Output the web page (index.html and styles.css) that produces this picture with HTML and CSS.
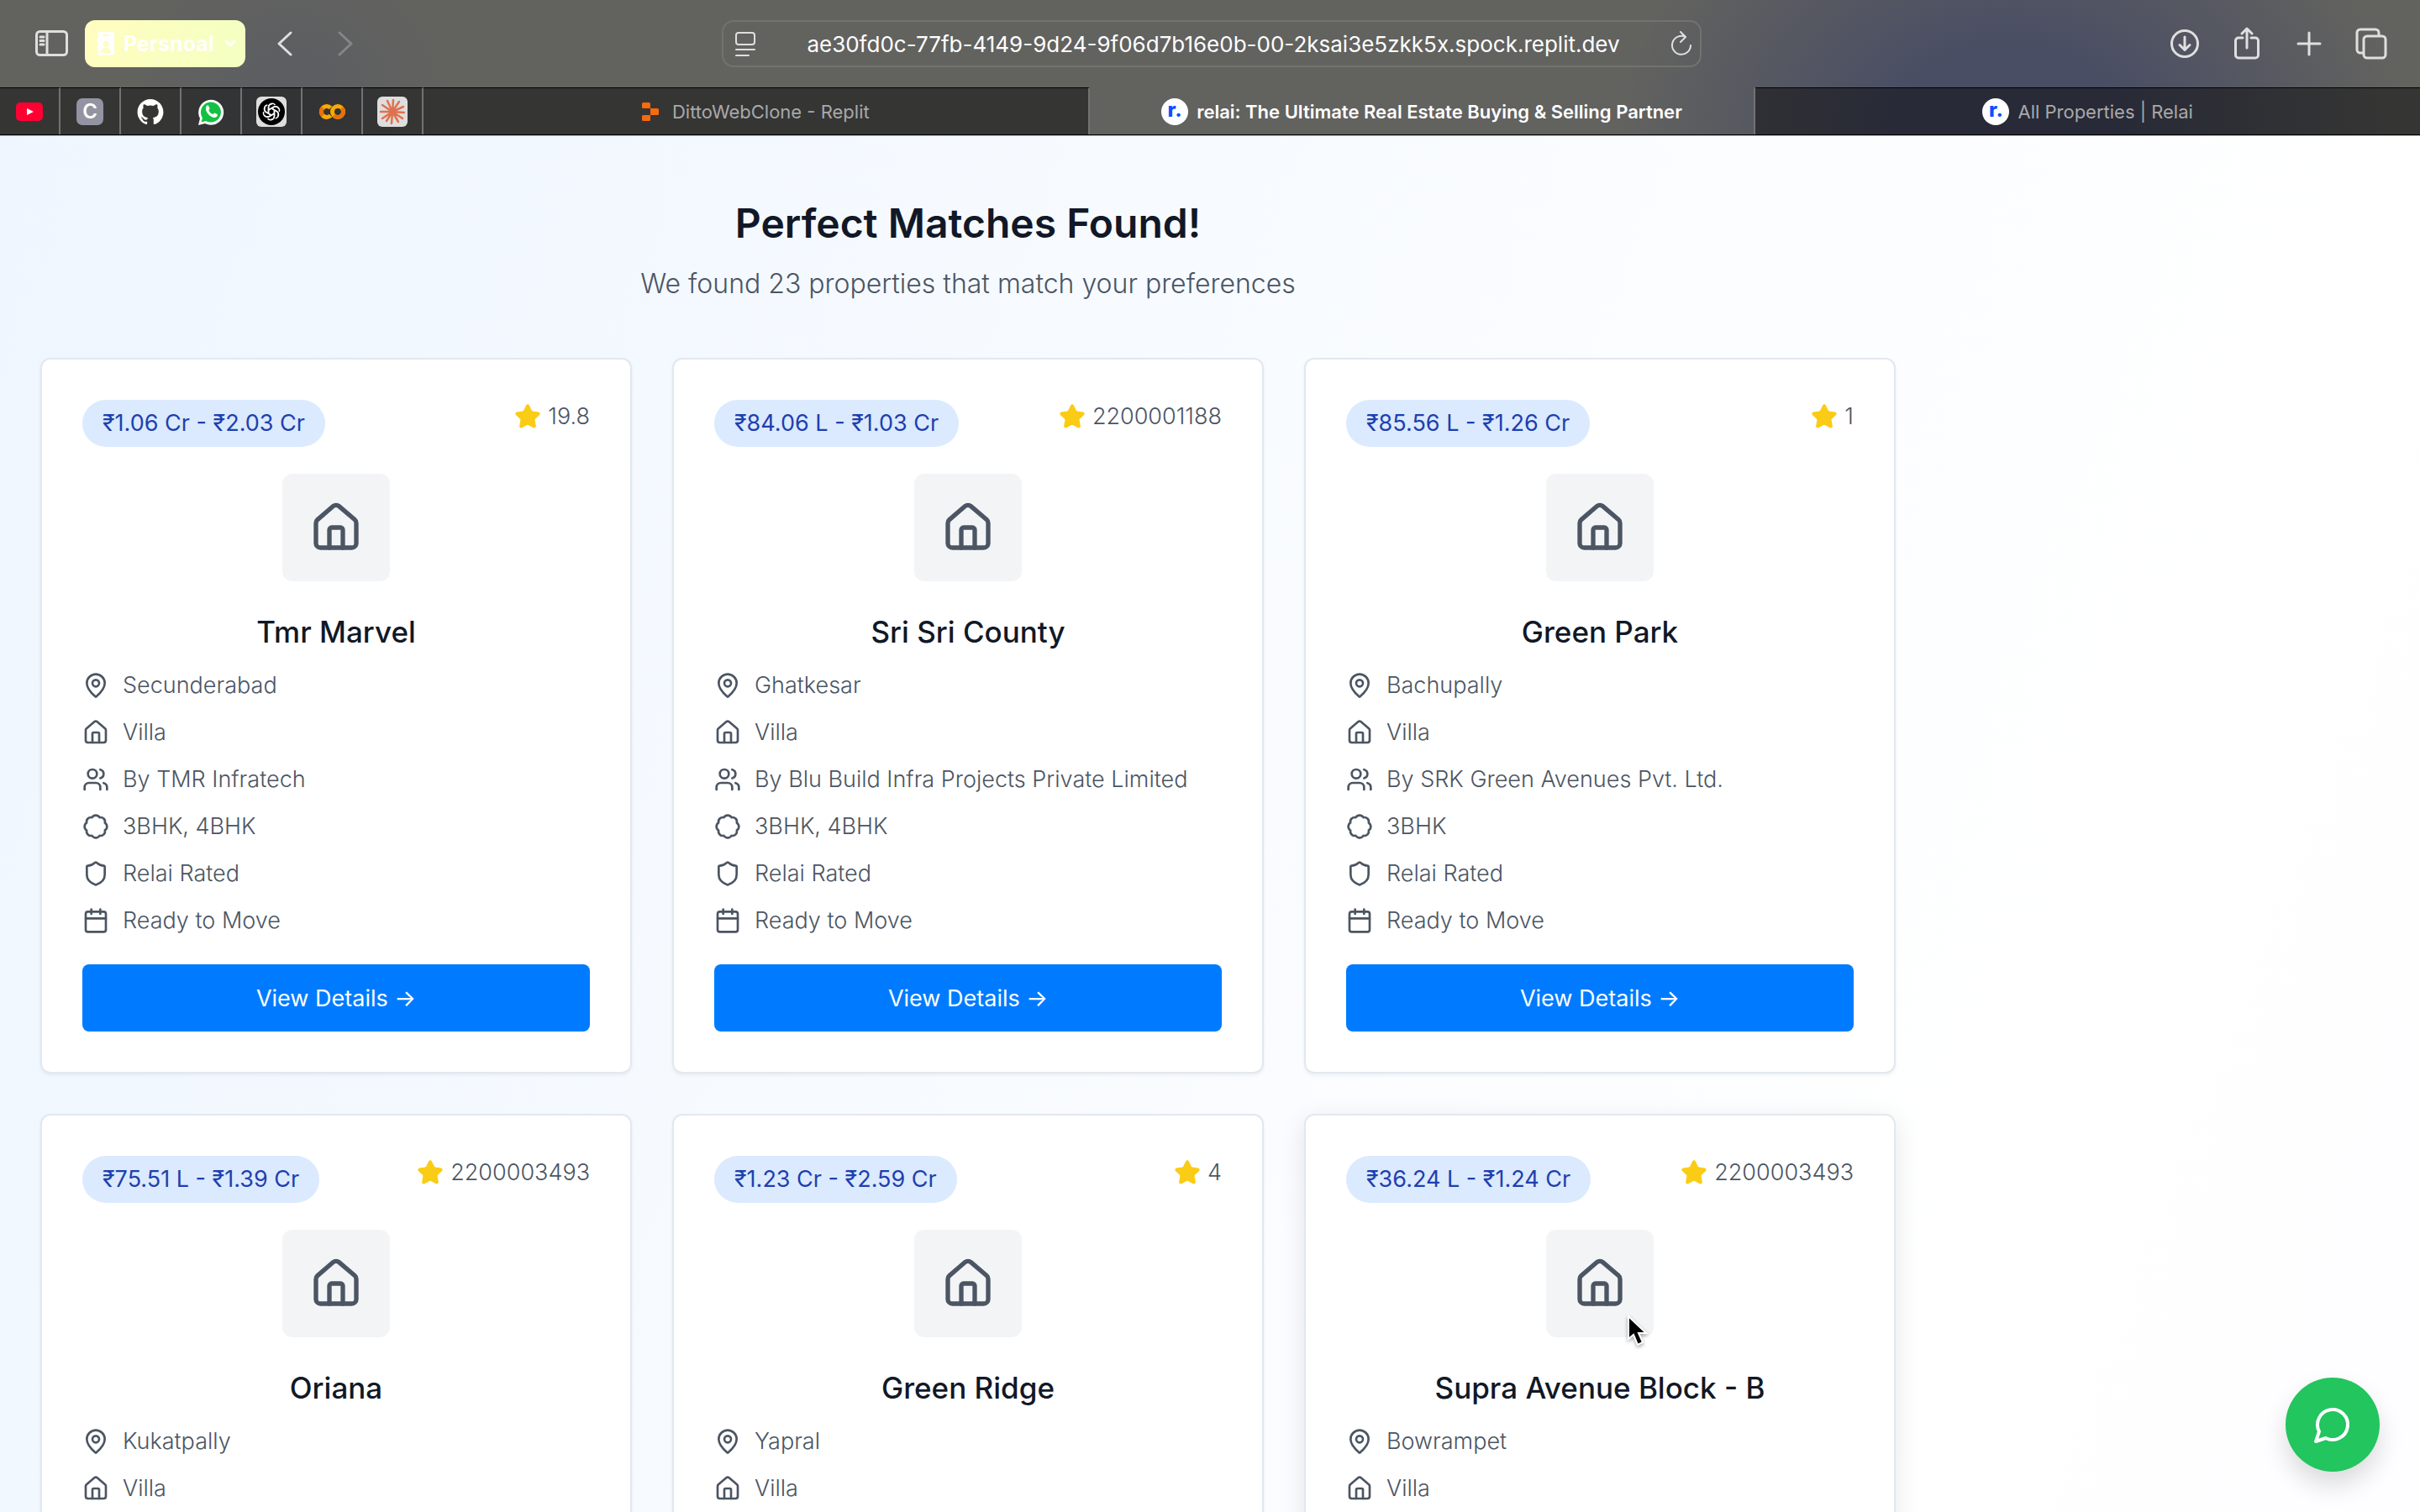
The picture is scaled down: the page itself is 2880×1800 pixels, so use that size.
FILE: index.html
```html
<!DOCTYPE html>
<html lang="en">
<head>
<meta charset="utf-8">
<meta name="viewport" content="width=device-width, initial-scale=1">
<title>relai: The Ultimate Real Estate Buying &amp; Selling Partner</title>
<link rel="stylesheet" href="styles.css">
</head>
<body>
<svg class="sprite" aria-hidden="true">
  <symbol id="house" viewBox="0 0 24 24"><path d="M15 21v-8a1 1 0 0 0-1-1h-4a1 1 0 0 0-1 1v8"/><path d="M3 10a2 2 0 0 1 .709-1.528l7-5.999a2 2 0 0 1 2.582 0l7 5.999A2 2 0 0 1 21 10v9a2 2 0 0 1-2 2H5a2 2 0 0 1-2-2z"/></symbol>
  <symbol id="pin" viewBox="0 0 24 24"><path d="M20 10c0 4.993-5.539 10.193-7.399 11.799a1 1 0 0 1-1.202 0C9.539 20.193 4 14.993 4 10a8 8 0 0 1 16 0"/><circle cx="12" cy="10" r="3"/></symbol>
  <symbol id="users" viewBox="0 0 24 24"><path d="M16 21v-2a4 4 0 0 0-4-4H6a4 4 0 0 0-4 4v2"/><circle cx="9" cy="7" r="4"/><path d="M22 21v-2a4 4 0 0 0-3-3.87"/><path d="M16 3.13a4 4 0 0 1 0 7.75"/></symbol>
  <symbol id="badge" viewBox="0 0 24 24"><path d="M3.85 8.62a4 4 0 0 1 4.78-4.77 4 4 0 0 1 6.74 0 4 4 0 0 1 4.78 4.78 4 4 0 0 1 0 6.74 4 4 0 0 1-4.77 4.78 4 4 0 0 1-6.75 0 4 4 0 0 1-4.78-4.77 4 4 0 0 1 0-6.76Z"/></symbol>
  <symbol id="shield" viewBox="0 0 24 24"><path d="M20 13c0 5-3.5 7.5-7.66 8.95a1 1 0 0 1-.67-.01C7.5 20.5 4 18 4 13V6a1 1 0 0 1 1-1c2 0 4.5-1.2 6.24-2.72a1.17 1.17 0 0 1 1.52 0C14.51 3.81 17 5 19 5a1 1 0 0 1 1 1z"/></symbol>
  <symbol id="calendar" viewBox="0 0 24 24"><path d="M8 2v4M16 2v4M3 10h18"/><rect x="3" y="4" width="18" height="18" rx="2"/></symbol>
  <symbol id="star" viewBox="0 0 24 24"><path d="M11.525 2.295a.53.53 0 0 1 .95 0l2.31 4.679a2.123 2.123 0 0 0 1.595 1.16l5.166.756a.53.53 0 0 1 .294.904l-3.736 3.638a2.123 2.123 0 0 0-.611 1.878l.882 5.14a.53.53 0 0 1-.771.56l-4.618-2.428a2.122 2.122 0 0 0-1.973 0L6.396 21.01a.53.53 0 0 1-.77-.56l.881-5.139a2.122 2.122 0 0 0-.611-1.879L2.16 9.795a.53.53 0 0 1 .294-.906l5.165-.755a2.122 2.122 0 0 0 1.597-1.16z"/></symbol>
</svg>

<header class="browser">
  <div class="toolbar">
    <div class="toolbar-left">
      <button class="tool" aria-label="Sidebar"><svg class="w40" viewBox="0 0 40 32"><rect x="1.5" y="1.5" width="36" height="28" rx="4"/><path d="M14 2v27M6 8h4M6 12.500h4M6 17h4"/></svg></button>
      <button class="profile">
        <svg class="profile-card" viewBox="0 0 20 28"><path fill-rule="evenodd" d="M3 0h14a3 3 0 0 1 3 3v22a3 3 0 0 1-3 3H3a3 3 0 0 1-3-3V3a3 3 0 0 1 3-3zM6 3v2h8V3zM10 11a3.500 3.500 0 1 0 .01 0zM4 25c0-4 3-6 6-6s6 2 6 6z"/></svg>
        <span>Persnoal</span>
        <svg class="profile-arrow" viewBox="0 0 16 12"><path d="M3 3l5 5 5-5"/></svg>
      </button>
      <button class="tool back" aria-label="Back"><svg class="w20" viewBox="0 0 20 32"><path d="M17 3L3 16l14 13"/></svg></button>
      <button class="tool forward" aria-label="Forward"><svg class="w20" viewBox="0 0 20 32"><path d="M3 3l14 13L3 29"/></svg></button>
    </div>
    <div class="address">
      <svg class="w24" viewBox="0 0 24 30"><rect x="1" y="2" width="22" height="14" rx="3"/><path d="M1 22h22M1 29h15"/></svg>
      <input class="address-input" type="text" aria-label="Address" value="ae30fd0c-77fb-4149-9d24-9f06d7b16e0b-00-2ksai3e5zkk5x.spock.replit.dev">
      <button class="tool" aria-label="Reload"><svg class="w24" viewBox="0 0 24 30"><path d="M17 7A11 11 0 1 0 23 17M11 1l6 6-6 6"/></svg></button>
    </div>
    <div class="toolbar-right">
      <button class="tool" aria-label="Downloads"><svg class="w40" viewBox="0 0 40 40"><circle cx="20" cy="20" r="15.500"/><path d="M20 12v15M14 21.500l6 6 6-6"/></svg></button>
      <button class="tool" aria-label="Share"><svg class="w40" viewBox="0 0 40 40"><path d="M15 13h-5a3.500 3.500 0 0 0-3.500 3.500v17A3.500 3.500 0 0 0 10 37h20a3.500 3.500 0 0 0 3.500-3.500v-17A3.500 3.500 0 0 0 30 13h-5M20 25V3M14 8l6-6 6 6"/></svg></button>
      <button class="tool" aria-label="New tab"><svg class="w40" viewBox="0 0 40 40"><path d="M20 7v26M7 20h26"/></svg></button>
      <button class="tool" aria-label="Tab overview"><svg class="w40" viewBox="0 0 40 40"><path d="M10 31H7a4 4 0 0 1-4-4V7a4 4 0 0 1 4-4h18a4 4 0 0 1 4 4v3"/><rect x="11" y="11" width="26" height="26" rx="4"/></svg></button>
    </div>
  </div>

  <nav class="tabs" aria-label="Tabs">
    <a class="pinned" href="#" aria-label="YouTube"><svg viewBox="0 0 36 36"><rect x="2" y="7" width="32" height="22" rx="5" fill="#ff0033"/><path d="M15 14l8 4-8 4z" fill="#fff"/></svg></a>
    <a class="pinned" href="#" aria-label="C"><span class="letter">C</span></a>
    <a class="pinned" href="#" aria-label="GitHub"><svg viewBox="-2 -2 28 28"><path fill="#fff" d="M12 .297c-6.630 0-12 5.373-12 12 0 5.303 3.438 9.800 8.205 11.385.6.113.820-.258.820-.577 0-.285-.010-1.040-.015-2.040-3.338.724-4.042-1.610-4.042-1.610C4.422 18.070 3.633 17.700 3.633 17.700c-1.087-.744.084-.729.084-.729 1.205.084 1.838 1.236 1.838 1.236 1.070 1.835 2.809 1.305 3.495.998.108-.776.417-1.305.760-1.605-2.665-.3-5.466-1.332-5.466-5.930 0-1.310.465-2.380 1.235-3.220-.135-.303-.540-1.523.105-3.176 0 0 1.005-.322 3.300 1.230.960-.267 1.980-.399 3-.405 1.020.006 2.040.138 3 .405 2.280-1.552 3.285-1.230 3.285-1.230.645 1.653.240 2.873.120 3.176.765.840 1.230 1.910 1.230 3.220 0 4.610-2.805 5.625-5.475 5.920.420.360.810 1.096.810 2.220 0 1.606-.015 2.896-.015 3.286 0 .315.210.690.825.570C20.565 22.092 24 17.592 24 12.297c0-6.627-5.373-12-12-12"/></svg></a>
    <a class="pinned" href="#" aria-label="WhatsApp"><svg viewBox="0 0 36 36"><path fill="#fff" d="M3 34l2-8A15 15 0 1 1 11 32z"/><path fill="#12c143" d="M6.500 30.500l1.500-5.200A12 12 0 1 1 12 29z"/><path fill="#fff" d="M13 11c.8-.8 2-.6 2.300.2l1.200 2.800c.2.600-1.200 1.900-1 2.400 1 2 2.600 3.600 4.700 4.500.600.200 1.700-1.700 2.300-1.500l3 1.500c.9.500.3 2.400-.6 3.100-2.500 2-6.400.4-9.300-2.300-3-2.900-4.800-7.300-2.900-10.400z"/></svg></a>
    <a class="pinned" href="#" aria-label="ChatGPT"><svg viewBox="0 0 36 36"><rect width="36" height="36" rx="6" fill="#dedede"/><circle cx="18" cy="18" r="16" fill="#000"/><g fill="none" stroke="#fff" stroke-width="1.500" stroke-linejoin="round"><path id="petal" d="M14.500 20V12.500a4.500 4.500 0 0 1 8-2.500M14.500 16l6-3.500a4.500 4.500 0 0 1 6 1.500"/><use href="#petal" transform="rotate(60 18 18)"/><use href="#petal" transform="rotate(120 18 18)"/><use href="#petal" transform="rotate(180 18 18)"/><use href="#petal" transform="rotate(240 18 18)"/><use href="#petal" transform="rotate(300 18 18)"/></g></svg></a>
    <a class="pinned" href="#" aria-label="Colab"><svg viewBox="0 0 36 36"><g fill="none" stroke-width="5"><path stroke="#f9ab00" d="M16.500 13.500A6.500 6.500 0 1 0 16.500 22.500"/><path stroke="#e8710a" d="M7.400 13.400a6.500 6.500 0 0 0 0 9.200"/><circle cx="25" cy="18" r="6.500" stroke="#f9ab00"/><path stroke="#e8710a" d="M29.600 13.400a6.500 6.500 0 0 1-9.200 9.200"/></g></svg></a>
    <a class="pinned" href="#" aria-label="Claude"><svg viewBox="0 0 36 36"><rect width="36" height="36" rx="6" fill="#dedede"/><g stroke="#e0714f" stroke-width="2.500" stroke-linecap="round"><path d="M18 18L19 4M18 18L26 6M18 18l13-6M18 18l14 1M18 18l12 8M18 18l7 12M18 18l-1 14M18 18l-7 11M18 18L6 26M18 18H4M18 18L6 10M18 18L12 5"/></g></svg></a>
    <a class="tab" href="#"><svg class="replit" viewBox="0 0 20 24"><path fill="#f9690e" d="M1.500 1h7A1.500 1.500 0 0 1 10 2.500V8H1.500A1.500 1.500 0 0 1 0 6.500v-4A1.500 1.500 0 0 1 1.500 1zM10 8h8.500A1.500 1.500 0 0 1 20 9.500v5a1.500 1.500 0 0 1-1.500 1.500H10zM1.500 16H10v5.500A1.500 1.500 0 0 1 8.500 23h-7A1.500 1.500 0 0 1 0 21.500v-4A1.500 1.500 0 0 1 1.500 16z"/></svg><span>DittoWebClone - Replit</span></a>
    <a class="tab active" href="#" aria-current="page"><span class="relai">r.</span><span>relai: The Ultimate Real Estate Buying &amp; Selling Partner</span></a>
    <a class="tab" href="#"><span class="relai">r.</span><span>All Properties | Relai</span></a>
  </nav>
</header>

<main class="page">
  <div class="container">
    <div class="intro">
      <h1>Perfect Matches Found!</h1>
      <p>We found 23 properties that match your preferences</p>
    </div>
    <div class="grid">
      <article class="card">
        <div class="card-top"><span class="price">₹1.06 Cr - ₹2.03 Cr</span><span class="rating"><svg class="star"><use href="#star"/></svg>19.8</span></div>
        <div class="thumb"><svg class="icon"><use href="#house"/></svg></div>
        <h2>Tmr Marvel</h2>
        <ul class="facts">
          <li><svg class="icon"><use href="#pin"/></svg>Secunderabad</li>
          <li><svg class="icon"><use href="#house"/></svg>Villa</li>
          <li><svg class="icon"><use href="#users"/></svg>By TMR Infratech</li>
          <li><svg class="icon"><use href="#badge"/></svg>3BHK, 4BHK</li>
          <li><svg class="icon"><use href="#shield"/></svg>Relai Rated</li>
          <li><svg class="icon"><use href="#calendar"/></svg>Ready to Move</li>
        </ul>
        <button class="details">View Details →</button>
      </article>
      <article class="card">
        <div class="card-top"><span class="price">₹84.06 L - ₹1.03 Cr</span><span class="rating"><svg class="star"><use href="#star"/></svg>2200001188</span></div>
        <div class="thumb"><svg class="icon"><use href="#house"/></svg></div>
        <h2>Sri Sri County</h2>
        <ul class="facts">
          <li><svg class="icon"><use href="#pin"/></svg>Ghatkesar</li>
          <li><svg class="icon"><use href="#house"/></svg>Villa</li>
          <li><svg class="icon"><use href="#users"/></svg>By Blu Build Infra Projects Private Limited</li>
          <li><svg class="icon"><use href="#badge"/></svg>3BHK, 4BHK</li>
          <li><svg class="icon"><use href="#shield"/></svg>Relai Rated</li>
          <li><svg class="icon"><use href="#calendar"/></svg>Ready to Move</li>
        </ul>
        <button class="details">View Details →</button>
      </article>
      <article class="card">
        <div class="card-top"><span class="price">₹85.56 L - ₹1.26 Cr</span><span class="rating"><svg class="star"><use href="#star"/></svg>1</span></div>
        <div class="thumb"><svg class="icon"><use href="#house"/></svg></div>
        <h2>Green Park</h2>
        <ul class="facts">
          <li><svg class="icon"><use href="#pin"/></svg>Bachupally</li>
          <li><svg class="icon"><use href="#house"/></svg>Villa</li>
          <li><svg class="icon"><use href="#users"/></svg>By SRK Green Avenues Pvt. Ltd.</li>
          <li><svg class="icon"><use href="#badge"/></svg>3BHK</li>
          <li><svg class="icon"><use href="#shield"/></svg>Relai Rated</li>
          <li><svg class="icon"><use href="#calendar"/></svg>Ready to Move</li>
        </ul>
        <button class="details">View Details →</button>
      </article>
      <article class="card">
        <div class="card-top"><span class="price">₹75.51 L - ₹1.39 Cr</span><span class="rating"><svg class="star"><use href="#star"/></svg>2200003493</span></div>
        <div class="thumb"><svg class="icon"><use href="#house"/></svg></div>
        <h2>Oriana</h2>
        <ul class="facts">
          <li><svg class="icon"><use href="#pin"/></svg>Kukatpally</li>
          <li><svg class="icon"><use href="#house"/></svg>Villa</li>
        </ul>
      </article>
      <article class="card">
        <div class="card-top"><span class="price">₹1.23 Cr - ₹2.59 Cr</span><span class="rating"><svg class="star"><use href="#star"/></svg>4</span></div>
        <div class="thumb"><svg class="icon"><use href="#house"/></svg></div>
        <h2>Green Ridge</h2>
        <ul class="facts">
          <li><svg class="icon"><use href="#pin"/></svg>Yapral</li>
          <li><svg class="icon"><use href="#house"/></svg>Villa</li>
        </ul>
      </article>
      <article class="card raised">
        <div class="card-top"><span class="price">₹36.24 L - ₹1.24 Cr</span><span class="rating"><svg class="star"><use href="#star"/></svg>2200003493</span></div>
        <div class="thumb"><svg class="icon"><use href="#house"/></svg>
          <svg class="cursor" viewBox="0 0 28 40"><path d="M3 3v27l6-5 5 12 6-3-5-11h9z"/></svg>
        </div>
        <h2>Supra Avenue Block - B</h2>
        <ul class="facts">
          <li><svg class="icon"><use href="#pin"/></svg>Bowrampet</li>
          <li><svg class="icon"><use href="#house"/></svg>Villa</li>
        </ul>
      </article>
    </div>
  </div>
</main>
<button class="chat" aria-label="Chat"><svg viewBox="0 0 24 24"><path d="M7.900 20A9 9 0 1 0 4 16.100L2 22Z"/></svg></button>
</body>
</html>
```
FILE: styles.css
```css
* { box-sizing: border-box; }

body {
  margin: 0;
  height: 100vh;
  display: flex;
  flex-direction: column;
  overflow: hidden;
  font-family: Inter, "Liberation Sans", sans-serif;
  color: #4b5563;
}

button, input { font: inherit; color: inherit; border: 0; background: none; padding: 0; }
a { color: inherit; text-decoration: none; }
svg { display: block; flex: none; }
.sprite { position: absolute; width: 0; height: 0; }

/* Browser chrome */
.browser {
  flex: none;
  background:
    radial-gradient(460px 320px at 83% 150px, #4a4e64 30%, rgba(74, 80, 100, 0)),
    radial-gradient(180px 160px at 12% 110px, #5b5d62, rgba(91, 93, 98, 0)),
    #62625f;
  border-bottom: 1px solid #000;
  box-shadow: 0 1px 0 #b4b4b4;
  margin-bottom: 1px;
  position: relative;
}

.toolbar {
  height: 104px;
  display: grid;
  grid-template-columns: 1fr minmax(0, 1166px) 1fr;
  align-items: center;
  padding: 0 38px 0 42px;
}
.toolbar-left, .toolbar-right { display: flex; align-items: center; }
.toolbar-right { justify-content: flex-end; gap: 34px; }
.tool { display: flex; }
.tool svg, .address > svg {
  fill: none;
  stroke: #dfdfdf;
  stroke-width: 3;
  stroke-linecap: round;
  stroke-linejoin: round;
}
.address svg { stroke-width: 2; }
.w20 { width: 20px; height: 32px; }
.w24 { width: 24px; height: 30px; }
.w40 { width: 40px; }
.profile {
  display: flex;
  align-items: center;
  gap: 11px;
  height: 56px;
  margin-left: 19px;
  padding: 0 10px 0 15px;
  border-radius: 12px;
  background: linear-gradient(100deg, #fffdbf, #f4ffc2);
  color: #fff;
  font-size: 25px;
  font-weight: 700;
}
.profile-card { width: 20px; height: 28px; fill: #fff; }
.profile-arrow { width: 16px; height: 12px; fill: none; stroke: #fff; stroke-width: 3; stroke-linecap: round; stroke-linejoin: round; }
.back { margin-left: 37px; }
.forward { margin-left: 52px; opacity: 0.3; }

.address {
  display: flex;
  align-items: center;
  height: 56px;
  padding: 0 10px 0 14px;
  border: 2px solid #72726f;
  border-radius: 14px;
  color: #fff;
}
.address-input {
  flex: 1;
  min-width: 0;
  text-align: center;
  font-size: 26px;
  font-weight: 400;
}

.tabs { display: flex; height: 56px; }
.pinned, .tab {
  display: flex;
  align-items: center;
  justify-content: center;
  border-top: 1px solid #000;
  border-right: 2px solid #727272;
  background: rgba(0, 0, 0, 0.45);
}
.pinned { flex: none; width: 72px; }
.pinned svg { width: 36px; height: 36px; }
.letter {
  width: 32px;
  height: 32px;
  border-radius: 7px;
  background: #9294a2;
  color: #fff;
  font-size: 24px;
  line-height: 32px;
  font-weight: 600;
  text-align: center;
}
.tab { flex: 1; gap: 10px; font-size: 22px; font-weight: 400; color: #a9a9a9; }
.tab:last-child { border-right: 0; }
.tab.active { background: none; border-top-color: transparent; color: #fff; font-weight: 600; }
.replit { width: 20px; height: 24px; margin-right: 6px; }
.relai {
  width: 32px;
  height: 32px;
  border-radius: 50%;
  background: #fff;
  color: #0a50ff;
  font-size: 24px;
  line-height: 28px;
  font-weight: 800;
  text-align: center;
}

/* Results page */
.page {
  flex: 1;
  min-height: 0;
  overflow: hidden;
  background: linear-gradient(to bottom right, #eff6ff, #fff, #faf5ff) 0 0 / 100% 7500px;
}
.container { max-width: 2304px; padding: 72px 48px; }
.intro { margin-bottom: 64px; text-align: center; }
h1, h2, p, ul { margin: 0; }
h1 { margin-bottom: 16px; font-size: 48px; line-height: 64px; font-weight: 600; color: #111827; }
.intro p { font-size: 32px; line-height: 48px; font-weight: 300; }

.grid {
  display: grid;
  grid-template-columns: repeat(3, minmax(0, 1fr));
  grid-auto-rows: 1fr;
  gap: 48px;
}
.card {
  padding: 48px;
  border: 2px solid #e2e8f0;
  border-radius: 12px;
  background: #fff;
  box-shadow: 0 2px 4px rgba(0, 0, 0, 0.06);
}
.raised { box-shadow: 0 8px 30px rgba(0, 0, 0, 0.1); }
.card-top { display: flex; justify-content: space-between; align-items: flex-start; margin-bottom: 32px; }
.price {
  padding: 8px 24px;
  border-radius: 28px;
  background: #dbeafe;
  color: #1e40af;
  font-size: 27px;
  line-height: 40px;
  font-weight: 400;
}
.rating { display: flex; align-items: center; gap: 8px; font-size: 27px; line-height: 40px; font-weight: 300; }
.star { width: 32px; height: 32px; fill: #facc15; stroke: #facc15; stroke-width: 2; }
.icon {
  width: 32px;
  height: 32px;
  fill: none;
  stroke: #4b5563;
  stroke-width: 2;
  stroke-linecap: round;
  stroke-linejoin: round;
}
.thumb {
  position: relative;
  display: flex;
  align-items: center;
  justify-content: center;
  width: 128px;
  height: 128px;
  margin: 0 auto 32px;
  border-radius: 12px;
  background: #f3f4f6;
}
.thumb .icon { width: 64px; height: 64px; }
.cursor {
  position: absolute;
  right: 5px;
  bottom: -12px;
  width: 28px;
  height: 40px;
  fill: #000;
  stroke: #fff;
  stroke-width: 2;
  filter: drop-shadow(0 2px 2px rgba(0, 0, 0, 0.35));
}
h2 { margin-bottom: 16px; font-size: 35px; line-height: 56px; font-weight: 500; color: #111827; text-align: center; }
.facts { display: grid; gap: 16px; padding: 0; list-style: none; }
.facts li { display: flex; align-items: center; gap: 16px; font-size: 27px; line-height: 40px; font-weight: 300; }
.details {
  width: 100%;
  height: 80px;
  margin-top: 32px;
  border-radius: 8px;
  background: #007bff;
  color: #fff;
  font-size: 27px;
  font-weight: 400;
}

.chat {
  position: fixed;
  right: 48px;
  bottom: 48px;
  display: flex;
  align-items: center;
  justify-content: center;
  width: 112px;
  height: 112px;
  border-radius: 50%;
  background: #22c55e;
  box-shadow: 0 16px 30px rgba(0, 0, 0, 0.14);
}
.chat svg { width: 48px; height: 48px; fill: none; stroke: #fff; stroke-width: 2; stroke-linecap: round; stroke-linejoin: round; }
```
